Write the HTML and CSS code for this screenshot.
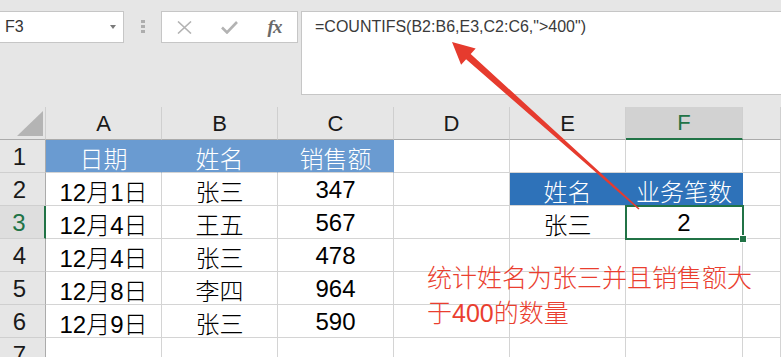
FILE: index.html
```html
<!DOCTYPE html>
<html lang="zh-CN">
<head>
    <meta charset="UTF-8">
    <title>COUNTIFS</title>
    <link rel="stylesheet" href="styles.css">
</head>
<body>
<div class="app">
    <!-- строка формул -->
    <div class="formula-bar">
        <div class="name-box">F3<span class="caret"></span></div>
        <div class="grip"><span></span><span></span><span></span></div>
        <div class="fx-buttons">
            <span class="btn">
                <svg width="15" height="13" viewBox="0 0 15 13"><path d="M1 0.5 L14 12.5 M14 0.5 L1 12.5" stroke="#b3b3b3" stroke-width="1.6" fill="none"/></svg>
            </span>
            <span class="btn">
                <svg width="17" height="13" viewBox="0 0 17 13"><path d="M1 6.5 L6 11.5 L16 1" stroke="#b3b3b3" stroke-width="2.6" fill="none"/></svg>
            </span>
            <span class="btn fx">fx</span>
        </div>
        <div class="formula-input">=COUNTIFS(B2:B6,E3,C2:C6,"&gt;400")</div>
    </div>

    <!-- таблица -->
    <div class="sheet">
        <div class="grid">
            <div class="corner"></div>
            <div class="col-head">A</div>
            <div class="col-head">B</div>
            <div class="col-head">C</div>
            <div class="col-head">D</div>
            <div class="col-head">E</div>
            <div class="col-head active">F</div>
            <div class="col-head"></div>

            <div class="row-head">1</div>
            <div class="cell head-light">日期</div>
            <div class="cell head-light">姓名</div>
            <div class="cell head-light">销售额</div>
            <div class="cell"></div>
            <div class="cell"></div>
            <div class="cell"></div>
            <div class="cell"></div>

            <div class="row-head">2</div>
            <div class="cell">12月1日</div>
            <div class="cell">张三</div>
            <div class="cell">347</div>
            <div class="cell"></div>
            <div class="cell head-dark">姓名</div>
            <div class="cell head-dark">业务笔数</div>
            <div class="cell"></div>

            <div class="row-head active">3</div>
            <div class="cell">12月4日</div>
            <div class="cell">王五</div>
            <div class="cell">567</div>
            <div class="cell"></div>
            <div class="cell">张三</div>
            <div class="cell">2</div>
            <div class="cell"></div>

            <div class="row-head">4</div>
            <div class="cell">12月4日</div>
            <div class="cell">张三</div>
            <div class="cell">478</div>
            <div class="cell"></div>
            <div class="cell"></div>
            <div class="cell"></div>
            <div class="cell"></div>

            <div class="row-head">5</div>
            <div class="cell">12月8日</div>
            <div class="cell">李四</div>
            <div class="cell">964</div>
            <div class="cell"></div>
            <div class="cell"></div>
            <div class="cell"></div>
            <div class="cell"></div>

            <div class="row-head">6</div>
            <div class="cell">12月9日</div>
            <div class="cell">张三</div>
            <div class="cell">590</div>
            <div class="cell"></div>
            <div class="cell"></div>
            <div class="cell"></div>
            <div class="cell"></div>

            <div class="row-head">7</div>
            <div class="cell"></div>
            <div class="cell"></div>
            <div class="cell"></div>
            <div class="cell"></div>
            <div class="cell"></div>
            <div class="cell"></div>
            <div class="cell"></div>
        </div>
    </div>

    <!-- выделенная ячейка F3 -->
    <div class="selection"></div>

    <!-- пояснение и стрелка -->
    <div class="note">统计姓名为张三并且销售额大<br>于400的数量</div>
    <svg class="arrow" width="781" height="357" viewBox="0 0 781 357">
        <polygon points="452,42 475.7,48.5 470.7,54 639.5,208.4 638.5,209.6 466.1,59.3 461.1,64.8" fill="#e63b2e"/>
    </svg>
</div>
</body>
</html>
```

FILE: styles.css
```css
body {
    margin: 0;
    background-color: #fff;
    font-family: "Liberation Sans", "Noto Sans CJK SC", sans-serif;
    overflow: hidden;
}
.app {
    position: relative;
    width: 781px;
    height: 357px;
    overflow: hidden;
}
.formula-bar {
    display: flex;
    align-items: flex-start;
    height: 95px;
    padding-top: 11px;
    box-sizing: border-box;
    background-color: #e6e6e6;
}
.name-box {
    width: 124px;
    height: 32px;
    box-sizing: border-box;
    display: flex;
    align-items: center;
    justify-content: space-between;
    padding: 0 7px 0 5px;
    background-color: #fff;
    border: 1px solid #c6c6c6;
    border-left: none;
    font-size: 16px;
    color: #333;
}
.caret {
    width: 0;
    height: 0;
    border-left: 3px solid transparent;
    border-right: 3px solid transparent;
    border-top: 4px solid #7a7a7a;
}
.grip {
    display: flex;
    flex-direction: column;
    gap: 2px;
    margin: 9px 16px 0 17px;
}
.grip span {
    width: 4px;
    height: 3px;
    background-color: #adadad;
}
.fx-buttons {
    width: 137px;
    height: 32px;
    box-sizing: border-box;
    display: flex;
    align-items: center;
    background-color: #fff;
    border: 1px solid #c6c6c6;
}
.btn {
    width: 45px;
    display: flex;
    justify-content: center;
    align-items: center;
}
.fx {
    font-family: "Liberation Serif", serif;
    font-style: italic;
    font-weight: bold;
    font-size: 19px;
    color: #6a6a6a;
    letter-spacing: -1px;
}
.formula-input {
    flex: 1;
    height: 84px;
    box-sizing: border-box;
    margin-left: 3px;
    padding: 5px 0 0 13px;
    background-color: #fff;
    border: 1px solid #c6c6c6;
    border-right: none;
    font-size: 16px;
    line-height: 20px;
    color: #3a3a3a;
}
.sheet {
    padding-top: 12px;
    background-color: #e6e6e6;
}
.grid {
    display: grid;
    grid-template-columns: 46px 116px 116px 116px 116px 116px 117px 1fr;
    grid-auto-rows: 33px;
}
.grid > div {
    box-sizing: border-box;
    display: flex;
    align-items: center;
    justify-content: center;
}
.corner {
    align-items: flex-end !important;
    justify-content: flex-end !important;
    padding: 0 2px 3px 0;
    background-color: #e6e6e6;
    border-right: 1px solid #cfcfcf;
    border-bottom: 1px solid #ababab;
}
.corner::after {
    content: "";
    width: 26px;
    height: 25px;
    background-color: #b4b4b4;
    clip-path: polygon(100% 0, 100% 100%, 0 100%);
}
.col-head {
    background-color: #e6e6e6;
    border-right: 1px solid #cfcfcf;
    border-bottom: 1px solid #ababab;
    font-size: 22px;
    color: #1a1a1a;
    padding-top: 1px;
}
.col-head.active {
    background-color: #d2d2d2;
    color: #217346;
    border-bottom: 2px solid #217346;
}
.row-head {
    background-color: #e6e6e6;
    border-right: 1px solid #ababab;
    border-bottom: 1px solid #cfcfcf;
    font-size: 24px;
    color: #1a1a1a;
    padding: 2px 6px 0 0;
}
.row-head.active {
    background-color: #dedede;
    color: #217346;
    border-right: 2px solid #217346;
}
.cell {
    background-color: #fff;
    border-right: 1px solid #d4d4d4;
    border-bottom: 1px solid #d4d4d4;
    font-size: 24px;
    font-weight: 300;
    color: #000;
    padding-top: 2px;
}
.head-light {
    background-color: #6a9bd1;
    border-right-color: #6a9bd1;
    color: #fff;
}
.head-dark {
    background-color: #2e72b9;
    border-right-color: #2e72b9;
    color: #fff;
}
/* рамка активной ячейки */
.selection {
    position: absolute;
    left: 625px;
    top: 205px;
    width: 119px;
    height: 35px;
    box-sizing: border-box;
    border: 2px solid #217346;
}
.selection::after {
    content: "";
    position: absolute;
    right: -5px;
    bottom: -5px;
    width: 6px;
    height: 6px;
    background-color: #217346;
    border: 1px solid #fff;
}
.note {
    position: absolute;
    left: 427px;
    top: 261px;
    font-size: 25px;
    font-weight: 300;
    line-height: 35px;
    color: #ea3e2f;
    white-space: nowrap;
}
.arrow {
    position: absolute;
    left: 0;
    top: 0;
    pointer-events: none;
}
```
